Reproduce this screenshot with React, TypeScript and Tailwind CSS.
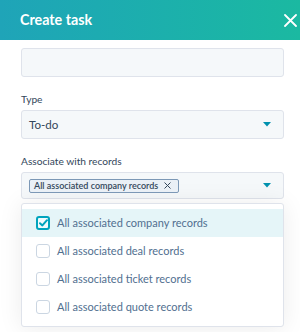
import React from "react";

const Caret = () => (
  <svg width="8" height="5" viewBox="0 0 8 5" className="shrink-0">
    <path d="M0 0 H8 L4 4.5 Z" fill="#0091ae" />
  </svg>
);

const Check = ({ checked }: { checked?: boolean }) => (
  <div
    className={
      checked
        ? "w-[14px] h-[14px] rounded-[3px] border-2 border-[#00a4bd] bg-[#f0fbfd] flex items-center justify-center"
        : "w-[14px] h-[14px] rounded-[3px] border border-[#cbd6e2] bg-white"
    }
  >
    {checked && (
      <svg width="9" height="8" viewBox="0 0 9 8">
        <path d="M1 4.2 L3.4 6.4 L8 1.2" stroke="#00a4bd" strokeWidth="2" fill="none" strokeLinecap="round" strokeLinejoin="round" />
      </svg>
    )}
  </div>
);

export default function App() {
  const options = [
    "All associated company records",
    "All associated deal records",
    "All associated ticket records",
    "All associated quote records",
  ];
  return (
    <div className="w-[300px] h-[332px] bg-white overflow-hidden font-['Lato','Noto_Sans',sans-serif]">
      <div className="h-[40px] bg-gradient-to-r from-[#1fa4b8] to-[#1bb9a1] flex items-center justify-between pl-[20px] pr-[3px]">
        <span className="text-white text-[14.3px] font-bold">Create task</span>
        <svg width="13" height="13" viewBox="0 0 13 13">
          <path d="M1 1 L12 12 M12 1 L1 12" stroke="white" strokeWidth="1.8" strokeLinecap="round" />
        </svg>
      </div>
      <div className="px-[21px] pr-[16px] pt-[8px]">
        <div className="h-[29px] rounded-[3px] border border-[#dfe3eb] bg-[#f5f8fa]" />
        <div className="mt-[15px] text-[10.2px] text-[#33475b] leading-[14px]">Type</div>
        <div className="mt-[4px] h-[29px] rounded-[3px] border border-[#dfe3eb] bg-[#f5f8fa] flex items-center justify-between pl-[7px] pr-[12px]">
          <span className="text-[11.6px] text-[#33475b]">To-do</span>
          <Caret />
        </div>
        <div className="mt-[15px] text-[10.2px] text-[#33475b] leading-[14px]">Associate with records</div>
        <div className="mt-[4px] h-[27px] rounded-[3px] border border-[#dfe3eb] bg-[#f5f8fa] flex items-center justify-between pl-[7px] pr-[12px]">
          <div className="h-[14px] border border-[#7c98b6] bg-[#eaf0f6] rounded-[2px] flex items-center pl-[4px] pr-[7px] gap-[6px]">
            <span className="text-[9px] font-semibold text-[#33475b] leading-none">All associated company records</span>
            <svg width="7" height="7" viewBox="0 0 7 7">
              <path d="M0.5 0.5 L6.5 6.5 M6.5 0.5 L0.5 6.5" stroke="#33475b" strokeWidth="1" />
            </svg>
          </div>
          <Caret />
        </div>
        <div className="mt-[4px] rounded-[3px] border border-[#dfe3eb] bg-white shadow-[0_1px_24px_rgba(0,0,0,0.08)] pt-[5px] pb-[5px]">
          {options.map((o, i) => (
            <div
              key={o}
              className={
                "h-[28px] flex items-center pl-[14px] gap-[7px] " + (i === 0 ? "bg-[#e5f5f8]" : "")
              }
            >
              <Check checked={i === 0} />
              <span className="text-[11px] text-[#516f90]">{o}</span>
            </div>
          ))}
        </div>
      </div>
    </div>
  );
}
